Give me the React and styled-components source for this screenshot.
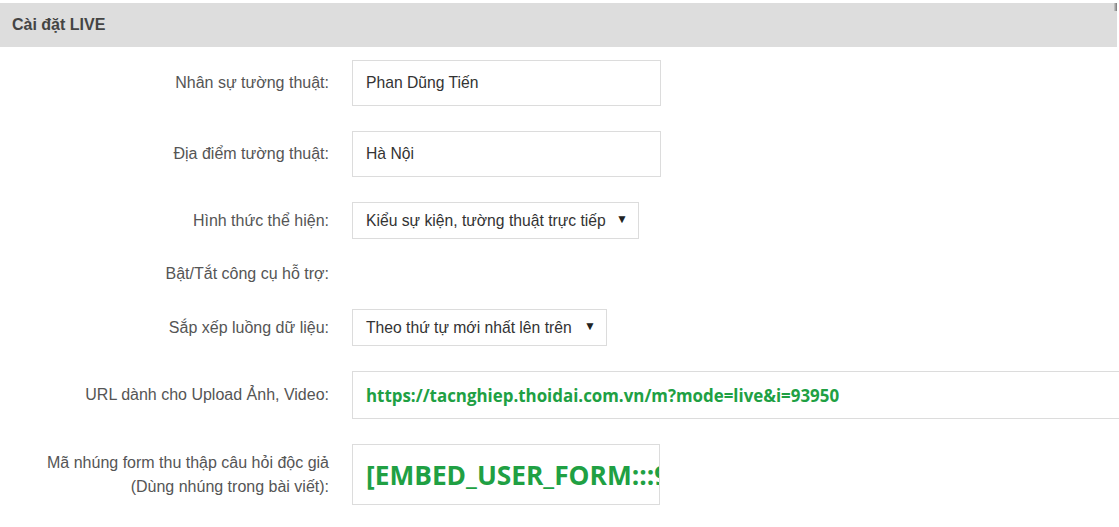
import React from "react";
import styled, { createGlobalStyle } from "styled-components";

const Global = createGlobalStyle`
  html, body { margin: 0; padding: 0; background: #fff; overflow: hidden; }
  body { font-family: "Liberation Sans", Arial, sans-serif; }
`;

const Page = styled.div`
  width: 1119px;
  height: 527px;
  padding-top: 3px;
  box-sizing: border-box;
  overflow: hidden;
`;

const Header = styled.div`
  position: relative;
  width: 1117px;
  height: 44px;
  background: #dddddd;
  display: flex;
  align-items: center;
  padding-left: 12px;
  box-sizing: border-box;
  font-size: 16px;
  font-weight: bold;
  color: #444;
  &::after {
    content: "";
    position: absolute;
    right: 0;
    top: 0;
    width: 3px;
    height: 8px;
    background: linear-gradient(to right, #ccc, #777);
  }
`;

const Form = styled.div`
  display: flex;
  flex-direction: column;
  gap: 25px;
  padding-top: 13px;
`;

const Row = styled.div`
  display: grid;
  grid-template-columns: 329px 1fr;
  column-gap: 23px;
  align-items: center;
  min-height: 20px;
`;

const Label = styled.div`
  text-align: right;
  font-size: 16px;
  line-height: ${(p) => (p.$multi ? 24 : 20)}px;
  color: #555;
  white-space: nowrap;
`;

const Box = styled.div`
  box-sizing: border-box;
  width: ${(p) => p.$w}px;
  height: ${(p) => p.$h}px;
  border: 1px solid #dcdcdc;
  background: #fff;
  display: flex;
  align-items: center;
  padding-left: 13px;
  overflow: hidden;
  white-space: nowrap;
`;

const InputText = styled.span`
  font-size: 15.7px;
  color: #333;
`;

const SelectBox = styled(Box)`
  justify-content: space-between;
  padding-right: 10px;
`;

const Arrow = styled.span`
  font-size: 12px;
  color: #222;
  margin-top: -3px;
`;

const GreenText = styled.span`
  font-family: "Open Sans", "Noto Sans", sans-serif;
  font-weight: 700;
  color: #20a043;
  font-size: ${(p) => p.$size}px;
`;

export default function App() {
  return (
    <Page>
      <Global />
      <Header>Cài đặt LIVE</Header>
      <Form>
        <Row>
          <Label>Nhân sự tường thuật:</Label>
          <Box $w={309} $h={46}>
            <InputText>Phan Dũng Tiến</InputText>
          </Box>
        </Row>
        <Row>
          <Label>Địa điểm tường thuật:</Label>
          <Box $w={309} $h={46}>
            <InputText>Hà Nội</InputText>
          </Box>
        </Row>
        <Row>
          <Label>Hình thức thể hiện:</Label>
          <SelectBox $w={287} $h={37}>
            <InputText>Kiểu sự kiện, tường thuật trực tiếp</InputText>
            <Arrow>▼</Arrow>
          </SelectBox>
        </Row>
        <Row>
          <Label>Bật/Tắt công cụ hỗ trợ:</Label>
          <div />
        </Row>
        <Row>
          <Label>Sắp xếp luồng dữ liệu:</Label>
          <SelectBox $w={255} $h={37}>
            <InputText>Theo thứ tự mới nhất lên trên</InputText>
            <Arrow>▼</Arrow>
          </SelectBox>
        </Row>
        <Row>
          <Label>URL dành cho Upload Ảnh, Video:</Label>
          <Box $w={800} $h={48}>
            <GreenText $size={16.9}>https://tacnghiep.thoidai.com.vn/m?mode=live&amp;i=93950</GreenText>
          </Box>
        </Row>
        <Row>
          <Label $multi>
            Mã nhúng form thu thập câu hỏi độc giả
            <br />
            (Dùng nhúng trong bài viết):
          </Label>
          <Box $w={308} $h={61}>
            <GreenText $size={26.3}>[EMBED_USER_FORM:::93950]</GreenText>
          </Box>
        </Row>
      </Form>
    </Page>
  );
}
